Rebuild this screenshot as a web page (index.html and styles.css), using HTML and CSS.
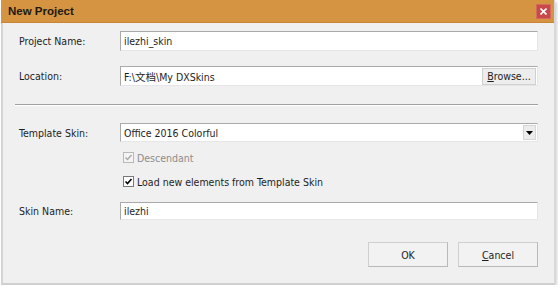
FILE: index.html
```html
<!DOCTYPE html>
<html>
<head>
<meta charset="utf-8">
<link rel="stylesheet" href="styles.css">
</head>
<body>
<div class="window">
  <div class="titlebar">
    <span class="title">New Project</span>
    <span class="close"><svg width="7" height="7" viewBox="0 0 7 7"><path d="M0.5 0.5 L6.5 6.5 M6.5 0.5 L0.5 6.5" stroke="#fff" stroke-width="1.6"/></svg></span>
  </div>
  <div class="content">
    <div class="row r1">
      <label class="lbl">Project Name:</label>
      <div class="field"><span class="val">ilezhi_skin</span></div>
    </div>
    <div class="row r2">
      <label class="lbl">Location:</label>
      <div class="field"><span class="val">F:\文档\My DXSkins</span><span class="browse"><u>B</u>rowse...</span></div>
    </div>
    <div class="sep"></div>
    <div class="row r3">
      <label class="lbl">Template Skin:</label>
      <div class="field sel"><span class="val">Office 2016 Colorful</span><span class="arrow"><svg width="7" height="4" viewBox="0 0 7 4"><path d="M0 0 H7 L3.5 4 Z" fill="#000"/></svg></span></div>
    </div>
    <div class="check disabled">
      <span class="box"><svg width="9" height="9" viewBox="0 0 9 9"><path d="M1.5 4.5 L3.5 6.5 L7.5 2" fill="none" stroke="#a8a8a8" stroke-width="1.4"/></svg></span>
      <span>Descendant</span>
    </div>
    <div class="check c2">
      <span class="box"><svg width="9" height="9" viewBox="0 0 9 9"><path d="M1.5 4.5 L3.5 6.5 L7.5 2" fill="none" stroke="#000" stroke-width="1.6"/></svg></span>
      <span>Load new elements from Template Skin</span>
    </div>
    <div class="row r4">
      <label class="lbl">Skin Name:</label>
      <div class="field"><span class="val">ilezhi</span></div>
    </div>
    <div class="buttons">
      <span class="btn">OK</span>
      <span class="btn"><u>C</u>ancel</span>
    </div>
  </div>
</div>
</body>
</html>
```
FILE: styles.css
```css
html, body {
  margin: 0;
  padding: 0;
  background: #ffffff;
}
body {
  font-family: Tahoma, "DejaVu Sans Condensed", "DejaVu Sans", "Noto Sans CJK SC", sans-serif;
  font-size: 10.5px;
  color: #1e1e1e;
}
.window {
  width: 551px;
  height: 283px;
  margin-left: 1px;
  border-left: 2px solid #d4d4d4;
  border-right: 1px solid #d8d8d8;
  border-bottom: 2px solid #cfcfcf;
  background: #f0f0f0;
  box-shadow: 2px 2px 3px rgba(0,0,0,0.18);
  display: flex;
  flex-direction: column;
}
.titlebar {
  height: 22px;
  background: #d49442;
  border-bottom: 1px solid #c98533;
  display: flex;
  align-items: center;
  justify-content: space-between;
  padding: 0 3px 0 5px;
  margin-left: -2px;
}
.title {
  font-family: "Liberation Sans", Arial, sans-serif;
  font-weight: bold;
  font-size: 11.5px;
  color: #1f1910;
  padding-left: 2px;
}
.close {
  width: 15px;
  height: 15px;
  background: #c9494b;
  border: 1px solid #d46a5c;
  display: flex;
  align-items: center;
  justify-content: center;
  box-sizing: border-box;
  margin-top: 1px;
}
.content {
  display: flex;
  flex-direction: column;
  padding: 8px 16px 0 16px;
}
.row {
  display: flex;
  align-items: center;
}
.lbl {
  width: 101px;
  flex: none;
}
.field {
  flex: 1;
  height: 19px;
  background: #fff;
  border: 1px solid;
  border-color: #a9a9a9 #e6e6e6 #e6e6e6 #a9a9a9;
  box-sizing: border-box;
  display: flex;
  align-items: center;
  justify-content: space-between;
  padding-left: 3px;
}
.r1 .field { height: 20px; }
.r2 { margin-top: 15px; }
.r2 .field { height: 20px; padding-right: 0; }
.browse {
  height: 17px;
  width: 54px;
  box-sizing: border-box;
  background: #ededed;
  border: 1px solid #d0d0d0;
  display: flex;
  align-items: center;
  justify-content: center;
  margin-right: 1px;
}
.sep {
  margin: 18px 0 0 -4px;
  height: 1px;
  background: #a0a0a0;
  border-bottom: 1px solid #ffffff;
}
.r3 { margin-top: 17px; }
.sel { padding-right: 1px; }
.arrow {
  width: 13px;
  height: 15px;
  background: #ececec;
  border: 1px solid #d6d6d6;
  box-sizing: border-box;
  display: flex;
  align-items: center;
  justify-content: center;
}
.check {
  display: flex;
  align-items: center;
  margin-left: 104px;
  gap: 3px;
  height: 13px;
}
.disabled {
  margin-top: 9px;
  color: #8d8d8d;
}
.c2 { margin-top: 11px; }
.box {
  width: 11px;
  height: 11px;
  box-sizing: border-box;
  border: 1px solid #7a7a7a;
  background: #fff;
  display: flex;
  align-items: center;
  justify-content: center;
}
.disabled .box { border-color: #b8b8b8; background: #f4f4f4; }
.r4 { margin-top: 14px; }
.r4 .field { height: 18px; }
.buttons {
  display: flex;
  justify-content: flex-end;
  gap: 10px;
  margin-top: 22px;
}
.btn {
  width: 80px;
  height: 25px;
  box-sizing: border-box;
  border: 1px solid #cfcfcf;
  border-right-color: #b8b8b8;
  border-bottom-color: #b8b8b8;
  background: #f2f2f2;
  display: flex;
  align-items: center;
  justify-content: center;
}
```
